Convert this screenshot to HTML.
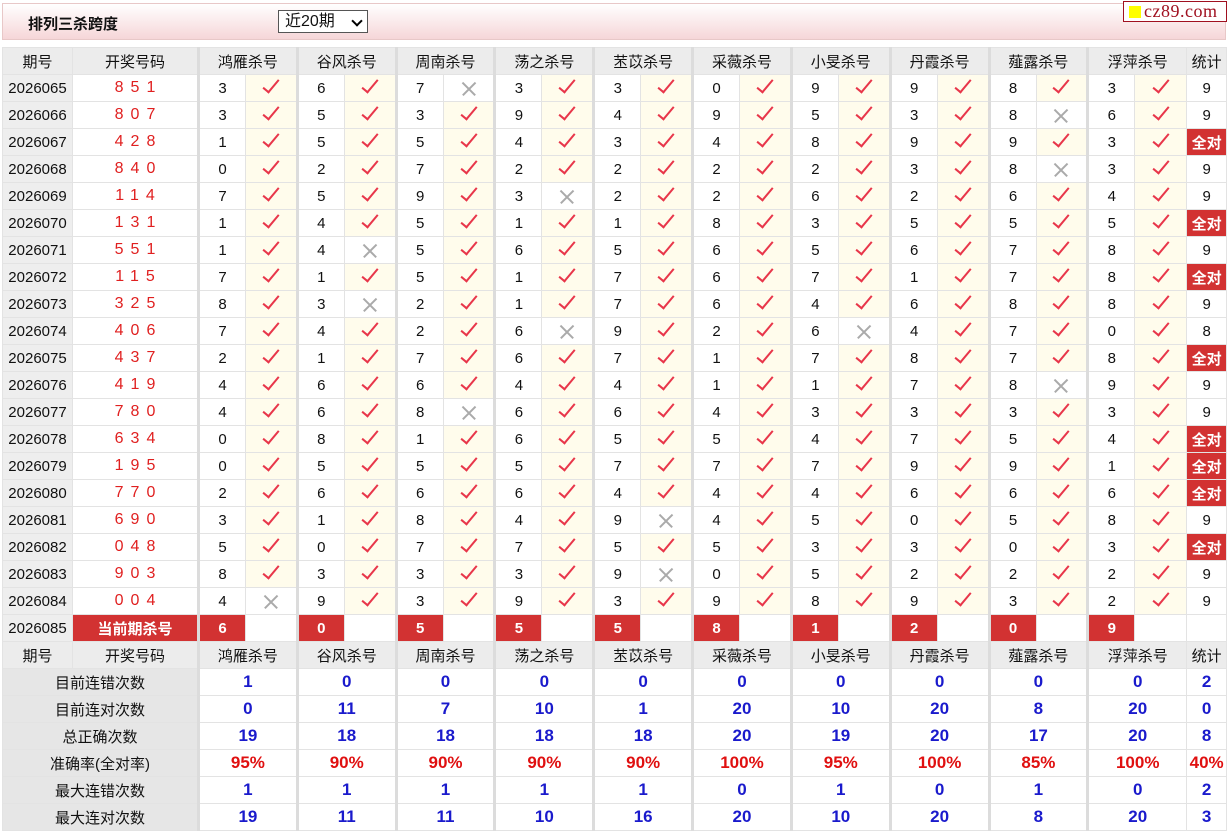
<!DOCTYPE html>
<html><head><meta charset="utf-8"><style>
*{margin:0;padding:0;box-sizing:border-box}
body{width:1228px;height:832px;overflow:hidden;background:#fff;font-family:"Liberation Sans","Noto Sans CJK SC",sans-serif;font-size:15px;color:#111}
.top{position:absolute;left:2px;top:3px;width:1224px;height:37px;border:1px solid #e8c8c8;background:linear-gradient(#fff,#f6d6d8)}
.ttl{position:absolute;left:25px;top:9px;font-weight:bold;font-size:15px}
.sel{position:absolute;left:275px;top:6px;width:90px;height:23px;border:1px solid #555;background:#fff;font-size:16px;padding-left:6px;line-height:21px}
.sel span{position:absolute;right:6px;top:6px;width:8px;height:8px;border:solid #000;border-width:0 2px 2px 0;transform:rotate(45deg)}
.logo{position:absolute;left:1123px;top:1px;width:104px;height:21px;border:1px solid #a01020;background:#fff;font-family:"Liberation Serif",serif;color:#a01020;font-size:18px;line-height:19px;padding-left:20px;letter-spacing:0.5px}
.logo:before{content:"";position:absolute;left:5px;top:4px;width:12px;height:12px;background:#ff0}
table{position:absolute;left:2px;top:47px;border-collapse:collapse;table-layout:fixed;width:1224px}
td{height:27px;border:1px solid #e3e3e3;text-align:center;padding:0;white-space:nowrap;overflow:hidden}
.h td{background:#ececec}
.q{background:#eeeeee}
.k{color:#e02020;letter-spacing:7px;padding-left:7px;font-size:16px}
.n{border-left:3px solid #dcdcdc}
.y{background:#fffcec}
.y i{display:inline-block;width:8px;height:17px;border:solid #e8364a;border-width:0 2px 2px 0;transform:rotate(40deg);margin-top:-4px}
.c i{display:inline-block;position:relative;width:16px;height:16px;vertical-align:middle}
.c i:before,.c i:after{content:"";position:absolute;left:-1px;top:7px;width:18px;height:1.5px;background:#aaa;transform:rotate(45deg)}
.c i:after{transform:rotate(-45deg)}
.r{background:#d23232!important;color:#fff;font-weight:bold}
.lb{background:#e6e6e6}
.b{color:#1a1acc;font-weight:bold;font-size:17px}
.p{color:#e01010;font-weight:bold;font-size:17px}
</style></head><body>
<div class="top"><div class="ttl">排列三杀跨度</div><div class="sel">近20期<span></span></div></div>
<div class="logo">cz89.com</div>
<table id="t">
<colgroup><col style="width:70px"><col style="width:126px"><col span="10" style="width:0"></colgroup>
</table>
<script>
var w='<colgroup><col style="width:70px"><col style="width:126px">';
for(var i=0;i<10;i++)w+='<col style="width:47px"><col style="width:51.8px">';
w+='<col style="width:40px"></colgroup>';
var names=["鸿雁","谷风","周南","荡之","苤苡","采薇","小旻","丹霞","薤露","浮萍"];
function hdr(){var s='<tr class="h"><td>期号</td><td>开奖号码</td>';names.forEach(function(n){s+='<td class="n" colspan="2">'+n+'杀号</td>'});return s+'<td>统计</td></tr>';}
var D=[["851","3673309983","2"],["807","3539495386","8"],["428","1554348993",""],["840","0272222383","8"],["114","7593226264","3"],["131","1451183555",""],["551","1456565678","1"],["115","7151767178",""],["325","8321764688","1"],["406","7426926470","36"],["437","2176717878",""],["419","4664411789","8"],["780","4686643333","2"],["634","0816554754",""],["195","0555777991",""],["770","2666444666",""],["690","3184945058","4"],["048","5077553303",""],["903","8333905222","4"],["004","4939398932","0"]];
var s=w+hdr();
D.forEach(function(r,j){s+='<tr><td class="q">'+(2026065+j)+'</td><td class="k">'+r[0]+'</td>';
for(var i=0;i<10;i++){var x=r[2].indexOf(String(i))>=0;s+='<td class="n">'+r[1][i]+'</td><td class="'+(x?'c':'y')+'"><i></i></td>';}
var c=10-r[2].length;s+=c==10?'<td class="r">全对</td>':'<td>'+c+'</td>';s+='</tr>';});
s+='<tr><td class="q">2026085</td><td class="r">当前期杀号</td>';"6055581209".split("").forEach(function(v){s+='<td class="n r">'+v+'</td><td></td>'});s+='<td></td></tr>';
s+=hdr();
var S=[["目前连错次数","1 0 0 0 0 0 0 0 0 0 2"],["目前连对次数","0 11 7 10 1 20 10 20 8 20 0"],["总正确次数","19 18 18 18 18 20 19 20 17 20 8"],["准确率(全对率)","95% 90% 90% 90% 90% 100% 95% 100% 85% 100% 40%"],["最大连错次数","1 1 1 1 1 0 1 0 1 0 2"],["最大连对次数","19 11 11 10 16 20 10 20 8 20 3"]];
S.forEach(function(r){s+='<tr><td class="lb" colspan="2">'+r[0]+'</td>';var v=r[1].split(" ");var cl=r[1].indexOf("%")>0?"p":"b";
for(var i=0;i<10;i++)s+='<td class="n '+cl+'" colspan="2">'+v[i]+'</td>';s+='<td class="'+cl+'">'+v[10]+'</td></tr>';});
document.getElementById("t").innerHTML=s;
</script>
</body></html>
